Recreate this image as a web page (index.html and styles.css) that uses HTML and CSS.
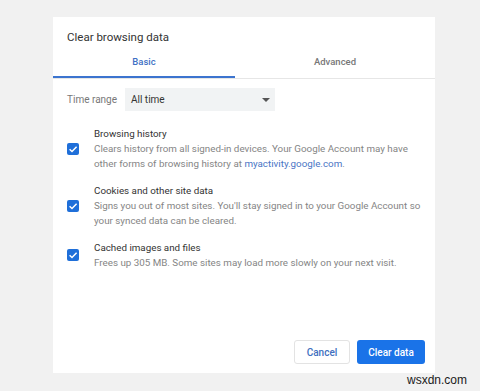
FILE: index.html
```html
<!DOCTYPE html>
<html lang="en">
<head>
<meta charset="utf-8">
<title>Clear browsing data</title>
<link rel="stylesheet" href="styles.css">
</head>
<body>
<div class="page">
  <div class="dialog">
    <div class="title">Clear browsing data</div>
    <div class="tabs">
      <div class="tab tab-active">Basic</div>
      <div class="tab tab-rest">Advanced</div>
    </div>
    <div class="range-row">
      <span class="range-label">Time range</span>
      <div class="select">
        <span>All time</span>
        <span class="arrow"></span>
      </div>
    </div>
    <div class="items">
      <div class="item">
        <span class="check"><svg viewBox="0 0 12 12" width="12" height="12"><path d="M2.6 6.2 L5 8.5 L9.6 3.8" fill="none" stroke="#fff" stroke-width="1.5"/></svg></span>
        <div class="item-text">
          <div class="item-title">Browsing history</div>
          <div class="item-desc">Clears history from all signed-in devices. Your Google Account may have other forms of browsing history at <span class="link">myactivity.google.com</span>.</div>
        </div>
      </div>
      <div class="item">
        <span class="check"><svg viewBox="0 0 12 12" width="12" height="12"><path d="M2.6 6.2 L5 8.5 L9.6 3.8" fill="none" stroke="#fff" stroke-width="1.5"/></svg></span>
        <div class="item-text">
          <div class="item-title">Cookies and other site data</div>
          <div class="item-desc">Signs you out of most sites. You'll stay signed in to your Google Account so your synced data can be cleared.</div>
        </div>
      </div>
      <div class="item">
        <span class="check"><svg viewBox="0 0 12 12" width="12" height="12"><path d="M2.6 6.2 L5 8.5 L9.6 3.8" fill="none" stroke="#fff" stroke-width="1.5"/></svg></span>
        <div class="item-text">
          <div class="item-title">Cached images and files</div>
          <div class="item-desc">Frees up 305 MB. Some sites may load more slowly on your next visit.</div>
        </div>
      </div>
    </div>
    <div class="footer">
      <button class="btn btn-cancel">Cancel</button>
      <button class="btn btn-primary">Clear data</button>
    </div>
  </div>
  <div class="watermark">wsxdn.com</div>
</div>
</body>
</html>
```
FILE: styles.css
```css
* { box-sizing: border-box; }
html, body { margin: 0; padding: 0; }
body {
  background: #f1f1f1;
  font-family: Roboto, "Noto Sans", Arial, sans-serif;
  width: 480px;
  height: 391px;
  overflow: hidden;
}
.page {
  padding: 17px 0 0 53px;
  position: relative;
  height: 391px;
}
.dialog {
  width: 382px;
  height: 356px;
  background: #fff;
  display: flex;
  flex-direction: column;
}
.title {
  padding: 13px 14px 0;
  font-size: 11.5px;
  line-height: 14px;
  color: #333;
}
.tabs {
  margin-top: 2px;
  display: flex;
  height: 33px;
  border-bottom: 1px solid #e6e6e6;
}
.tab {
  font-size: 9.5px;
  font-weight: 500;
  display: flex;
  align-items: center;
  justify-content: center;
  padding-bottom: 1px;
}
.tab-active {
  width: 182px;
  color: #3e70c4;
  border-bottom: 2px solid #3c74cf;
  padding-bottom: 0;
}
.tab-rest {
  flex: 1;
  color: #777;
}
.range-row {
  margin-top: 9px;
  padding-left: 14px;
  display: flex;
  align-items: center;
}
.range-label {
  font-size: 10px;
  color: #777;
  width: 58px;
}
.select {
  width: 150px;
  height: 23px;
  background: #f1f3f4;
  display: flex;
  align-items: center;
  justify-content: space-between;
  padding: 0 5px 0 6px;
  font-size: 10px;
  color: #333;
}
.arrow {
  width: 0;
  height: 0;
  border-left: 4px solid transparent;
  border-right: 4px solid transparent;
  border-top: 4px solid #555;
}
.items {
  margin-top: 15px;
  padding: 0 14px;
  display: flex;
  flex-direction: column;
  gap: 12px;
}
.item {
  display: flex;
  align-items: center;
}
.check {
  width: 12px;
  height: 12px;
  border-radius: 2px;
  background: #1f6fd9;
  display: block;
  flex: none;
  margin-right: 15px;
}
.check svg { display: block; }
.item-text {
  font-size: 9.8px;
  line-height: 15px;
  width: 338px;
}
.item-title { color: #333; }
.item-desc { color: #858585; }
.link { color: #4a75c5; }
.footer {
  margin-top: auto;
  padding: 0 10px 9px 0;
  display: flex;
  justify-content: flex-end;
  gap: 7px;
}
.btn {
  font-family: Roboto, "Noto Sans", Arial, sans-serif;
  font-size: 10px;
  font-weight: 500;
  height: 24px;
  border-radius: 3px;
  padding: 0;
  cursor: pointer;
}
.btn-cancel {
  width: 56px;
  background: #fff;
  border: 1px solid #e3e3e3;
  color: #4170c0;
}
.btn-primary {
  width: 68px;
  background: #1a73e8;
  border: none;
  color: #fff;
}
.watermark {
  position: absolute;
  left: 407px;
  top: 373px;
  font-family: "Liberation Sans", Arial, sans-serif;
  font-size: 12px;
  color: #1a1a1a;
}
```
